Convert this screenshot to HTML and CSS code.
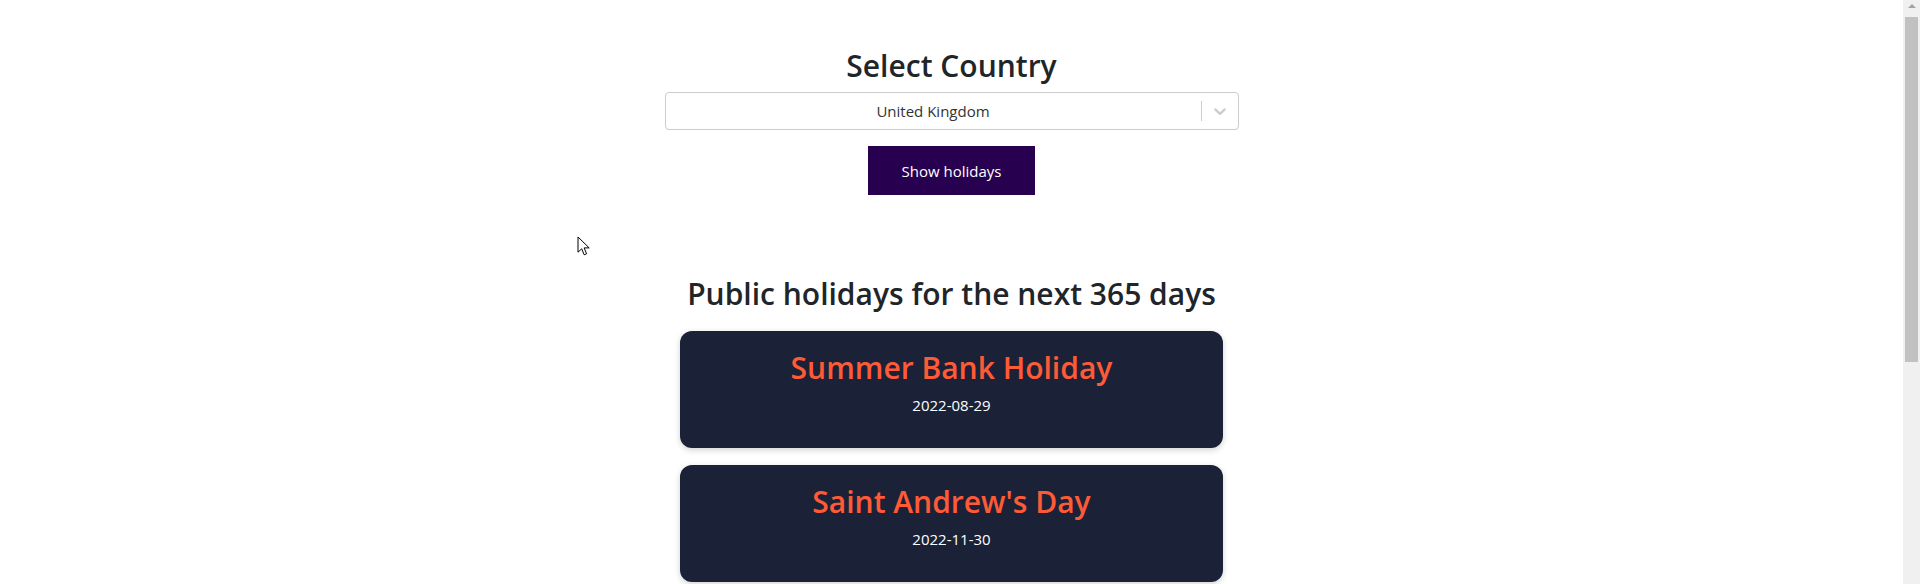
FILE: index.html
```html
<!DOCTYPE html>
<html lang="en">
<head>
<meta charset="utf-8">
<title>Public holidays</title>
<link rel="stylesheet" href="styles.css">
</head>
<body>
<main class="page">
  <h2 class="heading">Select Country</h2>
  <div class="select">
    <div class="select-value">United Kingdom</div>
    <span class="select-sep"></span>
    <div class="select-indicator">
      <svg width="20" height="20" viewBox="0 0 20 20" aria-hidden="true"><path d="M4.516 7.548c0.436-0.446 1.043-0.481 1.576 0l3.908 3.747 3.908-3.747c0.533-0.481 1.141-0.446 1.574 0 0.436 0.445 0.408 1.197 0 1.615-0.406 0.418-4.695 4.502-4.695 4.502-0.217 0.223-0.502 0.335-0.787 0.335s-0.57-0.112-0.789-0.335c0 0-4.287-4.084-4.695-4.502s-0.436-1.17 0-1.615z" fill="#cccccc"/></svg>
    </div>
  </div>
  <button class="btn">Show holidays</button>

  <h2 class="heading results">Public holidays for the next 365 days</h2>
  <div class="cards">
    <div class="card"><h3 class="card-title">Summer Bank Holiday</h3><p class="card-date">2022-08-29</p></div>
    <div class="card"><h3 class="card-title">Saint Andrew's Day</h3><p class="card-date">2022-11-30</p></div>
  </div>
</main>
<aside class="scrollbar" aria-hidden="true">
  <div class="scroll-btn"><span class="scroll-arrow"></span></div>
  <div class="scroll-thumb"></div>
</aside>
<svg class="cursor" width="14" height="21" viewBox="0 0 14 21" aria-hidden="true"><path d="M1 1 L1 16.2 L4.7 12.8 L7.2 18.8 L9.6 17.8 L7.1 11.9 L12.2 11.9 Z" fill="#ffffff" stroke="#000000" stroke-width="1" stroke-linejoin="miter"/></svg>
</body>
</html>
```
FILE: styles.css
```css
html, body {
  margin: 0;
  padding: 0;
  background: #ffffff;
}
body {
  display: flex;
  align-items: flex-start;
  height: 100vh;
  overflow: hidden;
  font-family: "Open Sans", "Noto Sans", sans-serif;
  color: #212529;
}
.page {
  flex: 1;
  display: flex;
  flex-direction: column;
  align-items: center;
  padding: 48px 0 0;
}
.heading {
  margin: 0;
  font-size: 30px;
  font-weight: 600;
  line-height: 1.2;
  color: #212529;
}
.select {
  margin-top: 8px;
  width: 574px;
  height: 38px;
  box-sizing: border-box;
  border: 1px solid #cccccc;
  border-radius: 4px;
  display: flex;
  align-items: center;
  background: #fff;
}
.select-value {
  flex: 1;
  text-align: center;
  font-size: 15px;
  color: #333333;
}
.select-sep {
  width: 1px;
  align-self: stretch;
  margin: 8px 0;
  background: #cccccc;
}
.select-indicator {
  padding: 8px;
  display: flex;
}
.btn {
  margin-top: 16px;
  width: 167px;
  height: 49px;
  border: none;
  background: #27004f;
  color: #ffffff;
  font-family: inherit;
  font-size: 15px;
  padding: 0;
}
.results {
  margin-top: 81px;
}
.cards {
  margin-top: 19px;
  width: 543px;
  display: flex;
  flex-direction: column;
  gap: 17px;
}
.card {
  background: #1b2238;
  border-radius: 12px;
  box-shadow: 0 2px 6px rgba(0, 0, 0, 0.18);
  height: 117px;
  box-sizing: border-box;
  padding-top: 19px;
  text-align: center;
}
.card-title {
  margin: 0;
  font-size: 30px;
  font-weight: 600;
  line-height: 1.2;
  color: #ff5a36;
}
.card-date {
  margin: 7px 0 0;
  font-size: 15px;
  line-height: 24px;
  color: #ffffff;
}
.scrollbar {
  flex: none;
  width: 17px;
  height: 100vh;
  background: #f0f0f0;
  display: flex;
  flex-direction: column;
  align-items: center;
}
.scroll-btn {
  width: 17px;
  height: 17px;
  display: flex;
  justify-content: center;
  padding-top: 4px;
  box-sizing: border-box;
}
.scroll-arrow {
  width: 0;
  height: 0;
  border-left: 4px solid transparent;
  border-right: 4px solid transparent;
  border-bottom: 4px solid #a3a3a3;
}
.scroll-thumb {
  width: 13px;
  height: 345px;
  background: #c1c1c1;
}
.cursor {
  position: absolute;
  left: 577px;
  top: 236px;
}
```
